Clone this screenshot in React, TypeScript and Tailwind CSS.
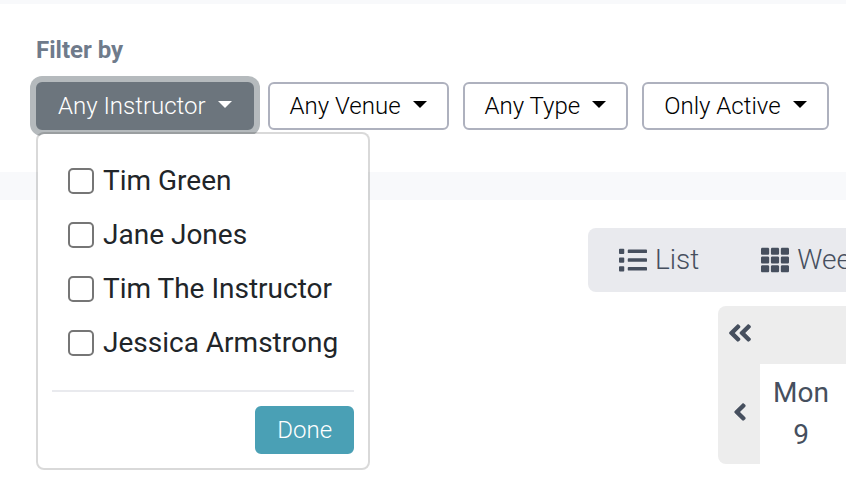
import { useState } from 'react'
import { clsx } from 'clsx'
import { FaAngleDoubleLeft, FaAngleLeft, FaList, FaTh } from 'react-icons/fa'

const INSTRUCTORS = ['Tim Green', 'Jane Jones', 'Tim The Instructor', 'Jessica Armstrong']

interface FilterButtonProps {
  label: string
  open?: boolean
  onClick?: () => void
}

function FilterButton({ label, open = false, onClick }: FilterButtonProps) {
  return (
    <button
      type="button"
      aria-haspopup="true"
      aria-expanded={open}
      onClick={onClick}
      className={clsx(
        'flex h-12 items-center gap-3 rounded-md border-2 px-5 text-2xl font-light whitespace-nowrap outline-none',
        open
          ? 'border-[#6c757d] bg-[#6c757d] text-white ring-[6px] ring-[#b5babd]'
          : 'border-[#aeb1be] bg-white text-black',
      )}
    >
      {label}
      {/* caret */}
      <span className="mb-1 border-x-[7px] border-t-[7px] border-x-transparent border-t-current" />
    </button>
  )
}

function InstructorMenu({ onDone }: { onDone: () => void }) {
  const [checked, setChecked] = useState<string[]>([])

  function toggle(name: string) {
    setChecked((prev) => (prev.includes(name) ? prev.filter((n) => n !== name) : [...prev, name]))
  }

  return (
    <div className="absolute top-full left-0 z-10 mt-0.5 rounded-lg border-2 border-black/15 bg-white bg-clip-padding p-3.5 text-[#212529]">
      <div className="flex flex-col gap-3 px-4 pt-3 pb-[26px]">
        {INSTRUCTORS.map((name) => (
          <label key={name} className="flex h-[42px] items-center gap-[9px] text-[28px] whitespace-nowrap">
            <input
              type="checkbox"
              checked={checked.includes(name)}
              onChange={() => toggle(name)}
              className="size-[26px] shrink-0 appearance-none rounded-[5px] border-2 border-[#767676] bg-white checked:bg-[#4aa0b5]"
            />
            {name}
          </label>
        ))}
      </div>
      <div className="flex justify-end border-t-2 border-[#e9eaee] pt-3.5">
        <button
          type="button"
          onClick={onDone}
          className="h-12 rounded-md border-2 border-[#4aa0b5] bg-[#4aa0b5] px-5 text-2xl leading-none font-light text-white"
        >
          Done
        </button>
      </div>
    </div>
  )
}

export default function App() {
  const [open, setOpen] = useState(true)

  return (
    <div className="min-h-screen overflow-hidden bg-white font-[Roboto,sans-serif]">
      <section className="border-t-4 border-b-[28px] border-[#f8f9fb] px-9 pt-7 pb-[42px]">
        <h2 className="mb-3.5 text-2xl leading-9 font-bold text-[#6f7b8b]">Filter by</h2>
        <div className="flex gap-3.5">
          <div className="relative">
            <FilterButton label="Any Instructor" open={open} onClick={() => setOpen(!open)} />
            {open && <InstructorMenu onDone={() => setOpen(false)} />}
          </div>
          <FilterButton label="Any Venue" />
          <FilterButton label="Any Type" />
          <FilterButton label="Only Active" />
        </div>
      </section>

      <section className="flex flex-col items-end gap-3.5 pt-7 text-[28px] text-[#464f5e]">
        <div className="flex h-16 w-[258px] items-center gap-[62px] overflow-hidden rounded-l-lg bg-[#e9eaee] pl-[31px] font-light whitespace-nowrap">
          <button type="button" className="flex shrink-0 items-center gap-2">
            <FaList />
            List
          </button>
          <button type="button" className="flex shrink-0 items-center gap-2">
            <FaTh />
            Week
          </button>
        </div>

        <div className="grid w-32 grid-cols-[42px_1fr] overflow-hidden rounded-l-lg bg-[#ededed]">
          <button type="button" aria-label="Previous week" className="flex h-[58px] items-center justify-center pb-1 pl-0.5">
            <FaAngleDoubleLeft />
          </button>
          <div />
          <button type="button" aria-label="Previous day" className="flex h-[100px] items-center justify-center pb-1 pl-0.5">
            <FaAngleLeft />
          </button>
          <div className="bg-white pt-2 pr-1 text-center leading-[42px]">
            <div>Mon</div>
            <div>9</div>
          </div>
        </div>
      </section>
    </div>
  )
}
